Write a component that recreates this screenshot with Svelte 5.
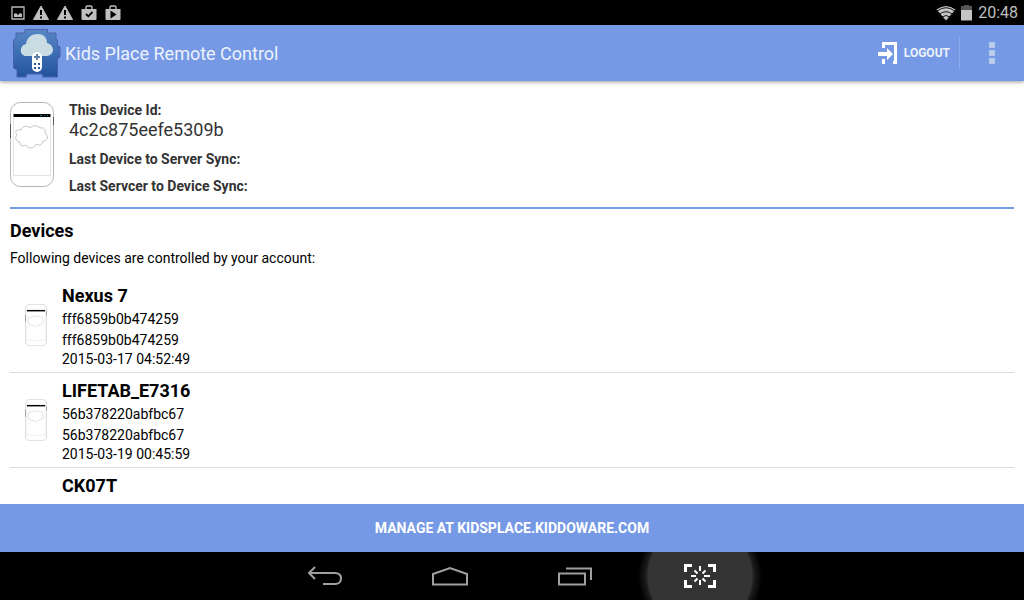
<script lang="ts">
  const deviceId = '4c2c875eefe5309b';

  const devices = [
    { name: 'Nexus 7', id: 'fff6859b0b474259', date: '2015-03-17 04:52:49' },
    { name: 'LIFETAB_E7316', id: '56b378220abfbc67', date: '2015-03-19 00:45:59' },
    { name: 'CK07T', id: '', date: '' },
  ];
</script>

{#snippet phone()}
  <svg class="phone" viewBox="0 0 44 85" fill="none" aria-hidden="true">
    <rect x="0.5" y="0.5" width="43" height="84" rx="10" fill="#fff" stroke="#b4b4b4" />
    <path d="M0.5 22v14M43.5 15v8" stroke="#555" />
    <path d="M3.5 15v58.5h37V15" stroke="#e4e4e4" />
    <path d="M3.500 13.500h37" stroke="#000" stroke-width="3" />
    <path d="M30 13.500h2m2 0h1m2 0h1" stroke="#257c96" />
    <path
      d="M11 28c1-4 7-5 9-2 2-3 8-3 10 0 4-1 6 2 5 5 4 3 3 8-2 8 0 4-4 5-7 3-2 5-8 5-10 1-4 2-7 0-6-3-5 0-5-6-3-7-3-4 0-6 4-5z"
      stroke="#c4c4c4"
    />
  </svg>
{/snippet}

<div class="screen">
  <div class="status">
    <div class="notifications">
      <svg width="14" height="14" viewBox="0 0 14 14">
        <path d="M1 1h12v12H1z" fill="none" stroke="#bbb" stroke-width="1.300" />
        <path d="M3 11V8l2-1 2 2 2-2 2 1v3z" fill="#bbb" />
      </svg>
      {#each [1, 2] as n (n)}
        <svg width="16" height="16" viewBox="0 0 16 16">
          <path d="M8 1l7.500 13.500H.5z" fill="#bfbfbf" stroke="#bfbfbf" stroke-linejoin="round" />
          <path d="M8 5v5M8 11.500v2" stroke="#000" stroke-width="2" />
        </svg>
      {/each}
      <svg width="16" height="16" viewBox="0 0 16 16">
        <path d="M5 5V2.500Q5 1 6.500 1h3Q11 1 11 2.500V5" fill="none" stroke="#bfbfbf" stroke-width="1.400" />
        <path d="M0.500 4h15v10q0 1-1 1h-13q-1 0-1-1z" fill="#bfbfbf" />
        <path d="M5 9l2.300 2.300L11.500 7" fill="none" stroke="#000" stroke-width="1.800" />
      </svg>
      <svg width="16" height="16" viewBox="0 0 16 16">
        <path d="M5 5V2.500Q5 1 6.500 1h3Q11 1 11 2.500V5" fill="none" stroke="#bfbfbf" stroke-width="1.400" />
        <path d="M0.500 4h15v10q0 1-1 1h-13q-1 0-1-1z" fill="#bfbfbf" />
        <path d="M5.500 5.500l6 4-6 4z" fill="#000" />
      </svg>
    </div>
    <div class="system">
      <svg width="20" height="16" viewBox="0 0 20 16">
        <path d="M0.500 4.500Q10-2.500 19.500 4.500L10 15.500z" fill="#c4c4c4" />
        <path d="M1 6.200Q10-.8 19 6.200M3.500 9.200q6.500-5 13 0M6 12q4-3 8 0" fill="none" stroke="#000" stroke-width="0.900" />
      </svg>
      <svg width="11" height="16" viewBox="0 0 11 16">
        <path d="M3 0h5v1h3v5H0V1h3z" fill="#555" />
        <path d="M0 5h11v10.500H0z" fill="#c4c4c4" />
      </svg>
      <span>20:48</span>
    </div>
  </div>

  <header>
    <svg class="logo" width="50" height="50" viewBox="0 0 50 50" aria-hidden="true">
      <defs>
        <linearGradient id="logo-bg" x1="0" y1="0" x2="0" y2="1">
          <stop offset="0" stop-color="#5787c6" />
          <stop offset="1" stop-color="#23539d" />
        </linearGradient>
      </defs>
      <path
        d="M13 1.500h22.500v3.500H44v6l1.500 1v5l2.500 2v10l-2.500 2v18H31l-1-3H15l-1 3H5v-7l-3.500-2V12L4 10V5h9z"
        fill="url(#logo-bg)"
        stroke="#4d60ae"
        stroke-linejoin="round"
      />
      <path
        d="M15 28C8 29 6 18 14 16 15 9 20 6 26 6c6 0 9 4 9 9 8 2 8 12 0 13z"
        fill="#c9dce4"
      />
      <rect x="20" y="24" width="10" height="20" rx="5" fill="#fff" />
      <path d="M25 26v6M22 29h6" stroke="#617fa8" stroke-width="2" />
      <path d="M22 36h2m2 0h2m-6 4h2m2 0h2" stroke="#2c5597" stroke-width="2" />
    </svg>
    <h1>Kids Place Remote Control</h1>
    <button class="logout" type="button">
      <svg width="20" height="22" viewBox="0 0 20 22" aria-hidden="true">
        <path d="M5.500 6V1.500h12v20M5.500 17v5M15 20.500h4" fill="none" stroke="#fff" stroke-width="3" />
        <path d="M0 10h9V6l6 6-6 6v-4H0z" fill="#fff" />
      </svg>
      Logout
    </button>
    <button class="menu" type="button" aria-label="More options">
      <i></i><i></i><i></i>
    </button>
  </header>

  <main>
    <section class="this-device">
      {@render phone()}
      <dl>
        <dt>This Device Id:</dt>
        <dd>{deviceId}</dd>
        <dt class="sync">Last Device to Server Sync:</dt>
        <dt class="sync">Last Servcer to Device Sync:</dt>
      </dl>
    </section>

    <h2>Devices</h2>
    <p>Following devices are controlled by your account:</p>

    <ul>
      {#each devices as { name, id, date }}
        <li>
          <div class="thumb">
            {#if id}{@render phone()}{/if}
          </div>
          <div class="info">
            <h3>{name}</h3>
            <div class="id">{id}</div>
            <div class="id">{id}</div>
            <div class="date">{date}</div>
          </div>
        </li>
      {/each}
    </ul>
  </main>

  <button class="manage" type="button">Manage at kidsplace.kiddoware.com</button>

  <nav>
    <button type="button" aria-label="Back">
      <svg width="36" height="20" viewBox="0 0 36 20">
        <path d="M8 1L2 7l6 6M2 7h26q6 0 6 5.500T28 18H16" />
      </svg>
    </button>
    <button type="button" aria-label="Home">
      <svg width="38" height="20" viewBox="0 0 38 20">
        <path d="M2 18.500V8L19 2l17 6v10.500z" />
      </svg>
    </button>
    <button type="button" aria-label="Recent apps">
      <svg width="36" height="20" viewBox="0 0 36 20">
        <path d="M2 7.500h26v11H2zM9 2.500h25V14" />
      </svg>
    </button>
    <button class="capture" type="button" aria-label="Screenshot">
      <svg width="32" height="24" viewBox="0 0 32 24">
        <path d="M1.500 8V1.500H8M24 1.500h6.500V8M1.500 16v6.500H8M24 22.500h6.500V16" stroke-width="3" />
        <path d="M16 2v5M16 16v5M7 12h5M20 12h6M10.500 6.500l3 3M18.500 9.500l3-3M10.500 17.500l3-3M18.500 14.500l3 3" />
      </svg>
    </button>
  </nav>
</div>

<style>
  :global(body) {
    background: #fff;
  }
  .screen {
    display: flex;
    flex-direction: column;
    height: 100vh;
    font-family: Roboto, 'Liberation Sans', sans-serif;
    font-size: 14px;
    color: #000;
  }
  h1,
  h2,
  h3,
  p,
  dl,
  dd,
  ul {
    margin: 0;
    padding: 0;
  }
  button {
    padding: 0;
    border: none;
    background: none;
    font: inherit;
    color: inherit;
  }
  svg {
    display: block;
    flex: none;
  }
  .status {
    display: flex;
    justify-content: space-between;
    align-items: center;
    height: 25px;
    flex: none;
    padding: 0 6px 0 11px;
    background: #000;
    color: #bfbfbf;
  }
  .notifications,
  .system {
    display: flex;
    align-items: center;
    gap: 8px;
  }
  .system {
    gap: 5px;
    font-size: 16px;
  }
  .system span {
    padding-left: 1px;
  }
  header {
    display: flex;
    align-items: center;
    height: 56px;
    flex: none;
    padding-left: 12px;
    background: #7599e5;
    color: #fff;
    box-shadow: 0 1px 4px rgba(0, 0, 0, 0.4);
    z-index: 1;
  }
  h1 {
    flex: 1;
    padding-left: 3px;
    font-size: 18px;
    font-weight: 400;
    color: #edf2fc;
  }
  .logout {
    display: flex;
    align-items: center;
    gap: 6px;
    height: 32px;
    padding-right: 9px;
    border-right: 1px solid #8caaea;
    font-size: 12px;
    font-weight: 700;
    text-transform: uppercase;
    color: #edf2fc;
  }
  .menu {
    display: flex;
    flex-direction: column;
    align-items: center;
    gap: 2px;
    width: 64px;
  }
  .menu i {
    width: 6px;
    height: 6px;
    background: #bacced;
  }
  main {
    flex: 1;
    min-height: 0;
    overflow: hidden;
    padding: 0 10px;
  }
  .this-device {
    display: flex;
    gap: 15px;
    padding: 21px 0 13px;
    border-bottom: 2px solid #7599e5;
    color: #333;
  }
  .phone {
    width: 44px;
    height: 85px;
  }
  dt {
    font-weight: 700;
    line-height: 16px;
  }
  dd {
    font-size: 18px;
    line-height: 24px;
  }
  .sync {
    padding-top: 9px;
  }
  .sync + .sync {
    padding-top: 11px;
  }
  h2,
  h3 {
    font-size: 18px;
    font-weight: 700;
    line-height: 24px;
  }
  h2 {
    padding-top: 10px;
  }
  p {
    padding-top: 4px;
    line-height: 22px;
  }
  ul {
    padding-top: 9px;
    list-style: none;
  }
  li {
    display: flex;
    align-items: center;
    height: 94px;
    border-bottom: 1px solid #ddd;
  }
  .thumb {
    width: 52px;
  }
  .thumb .phone {
    width: 22px;
    height: 42px;
    margin-left: 15px;
  }
  .info {
    height: 82px;
  }
  .id {
    height: 21px;
    line-height: 22px;
  }
  .date {
    line-height: 18px;
  }
  .manage {
    flex: none;
    height: 48px;
    background: #7599e5;
    color: #fff;
    font-weight: 700;
    text-transform: uppercase;
  }
  nav {
    display: flex;
    justify-content: center;
    height: 48px;
    flex: none;
    overflow: hidden;
    background: #000;
  }
  nav button {
    display: flex;
    align-items: center;
    justify-content: center;
    width: 125px;
  }
  nav svg {
    fill: none;
    stroke: #a0a0a0;
    stroke-width: 2;
  }
  .capture {
    width: 124px;
    background: radial-gradient(circle at center, #333 52px, #1c1c1c 54px, #000 62px);
  }
  .capture svg {
    stroke: #fff;
  }
</style>
